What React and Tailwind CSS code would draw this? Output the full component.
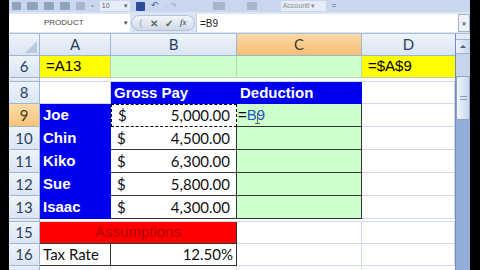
import React from "react";

const hdr = "bg-gradient-to-b from-[#eef3fa] to-[#dbe5f3] text-[#27415f]";
const grid = "border-r border-b border-[#d0d7e5]";
const arial = { fontFamily: '"Liberation Sans", Arial, sans-serif' };
const cal = { fontFamily: 'Lato, "Open Sans", sans-serif' };

function RowHead({ n, active, h }) {
  return (
    <div
      className={`w-[31px] shrink-0 flex items-center justify-center text-[15px] border-r border-b border-[#9eb6ce] ${
        active ? "bg-gradient-to-b from-[#fbdca8] to-[#f6c27a] text-[#4a3a1a]" : hdr
      }`}
      style={{ ...cal, height: h }}
    >
      {n}
    </div>
  );
}

function Money({ v, first }) {
  return (
    <div
      className={`w-[126px] shrink-0 flex items-center justify-between px-[6px] text-[15px] text-[#111] bg-white ${
        first ? "border border-dashed border-black" : "border-r border-b border-[#333]"
      }`}
      style={cal}
    >
      <span>$</span>
      <span>{v}</span>
    </div>
  );
}

function Icon({ c = "#7b8aa6", w = 10 }) {
  return <div className="h-[8px] rounded-[1px] opacity-70" style={{ width: w, background: c }} />;
}

export default function App() {
  const people = [
    ["9", "Joe", "5,000.00"],
    ["10", "Chin", "4,500.00"],
    ["11", "Kiko", "6,300.00"],
    ["12", "Sue", "5,800.00"],
    ["13", "Isaac", "4,300.00"],
  ];
  return (
    <div className="w-[480px] h-[270px] overflow-hidden bg-black flex">
      <div className="ml-[9px] w-[461px] h-full flex flex-col bg-white">
        {/* quick access toolbar */}
        <div className="h-[12px] bg-[#c9d8ef] flex items-center gap-[6px] pl-[3px] text-[8px] text-[#555]" style={arial}>
          <Icon w={9} />
          <Icon w={11} />
          <Icon w={10} />
          <Icon w={10} />
          <Icon w={9} c="#9aa7bf" />
          <span className="text-[#8a97b0]">•</span>
          <div className="w-[30px] h-[10px] bg-[#e6edf8] flex items-center justify-between px-[2px] text-[7px] text-[#666]">
            <span>10</span>
            <span>▾</span>
          </div>
          <div className="w-[9px] h-[9px] bg-[#2b4c9a] rounded-[1px]" />
          <span className="text-[#3a5aa8] text-[9px]">↶</span>
          <span className="text-[#9aa7bf]">- ↷</span>
          <div className="w-[24px]" />
          <Icon w={12} c="#9aa7bf" />
          <div className="w-[10px]" />
          <Icon w={10} c="#9aa7bf" />
          <div className="w-[12px]" />
          <div className="w-[45px] h-[10px] bg-[#e6edf8] flex items-center px-[2px] text-[7px] text-[#8a8a8a]">Accounti ▾</div>
          <span className="text-[#4a5a80] text-[8px]">=</span>
        </div>
        {/* formula bar */}
        <div className="h-[22px] bg-[#dbe5f4] flex items-center pt-[2px] pb-[1px] border-b border-[#a9bcd8]">
          <div className="w-[121px] h-full bg-white flex items-center justify-between pl-[35px] pr-[2px] text-[8px] text-[#444]" style={arial}>
            <span>PRODUCT</span>
            <span className="text-[7px]">▾</span>
          </div>
          <div className="w-[64px] h-[16px] mx-[1px] rounded-full bg-gradient-to-b from-[#f3f6fb] to-[#cfd9e8] border border-[#b4c2d8] flex items-center justify-around px-[4px] text-[10px]">
            <span className="text-[#9aa6b8]">(</span>
            <span className="text-[#666] font-bold">✕</span>
            <span className="text-[#4a6a3a] font-bold">✓</span>
            <span className="italic text-[#333] text-[9px]" style={{ fontFamily: '"Liberation Serif", serif' }}>fx</span>
          </div>
          <div className="flex-1 h-full bg-white flex items-center pl-[3px] text-[10px] text-[#222] border-l border-[#c5d0e0]" style={arial}>
            =B9
          </div>
          <div className="w-[12px] h-full bg-[#eef2f8] border border-[#9fb3cf] flex items-center justify-center text-[8px] text-[#333]">»</div>
        </div>
        <div className="flex-1 flex">
          <div className="flex-1 flex flex-col bg-white">
            {/* column headers */}
            <div className="h-[22px] flex shrink-0 text-[15px]" style={cal}>
              <div className={`w-[31px] border-r border-b border-[#9eb6ce] ${hdr} relative`}>
                <div className="absolute right-[2px] bottom-[2px] w-0 h-0 border-l-[12px] border-l-transparent border-b-[12px] border-b-[#b9c9de]" />
              </div>
              <div className={`w-[71px] flex items-center justify-center border-r border-b border-[#9eb6ce] ${hdr}`}>A</div>
              <div className={`w-[126px] flex items-center justify-center border-r border-b border-[#9eb6ce] ${hdr}`}>B</div>
              <div className="w-[125px] flex items-center justify-center border-r border-b border-[#9eb6ce] bg-gradient-to-b from-[#fbd9a6] to-[#f5bf74] text-[#4a3a1a]">C</div>
              <div className={`flex-1 flex items-center justify-center border-b border-[#9eb6ce] ${hdr}`}>D</div>
            </div>
            {/* row 6 */}
            <div className="h-[22px] flex shrink-0">
              <RowHead n="6" h={22} />
              <div className="w-[71px] bg-[#ffff00] flex items-center pl-[6px] text-[15px] border-r border-b border-[#c9c9a0]" style={arial}>=A13</div>
              <div className="w-[126px] bg-[#ccffcc] border-r border-b border-[#b6d9b6]" />
              <div className="w-[125px] bg-[#ccffcc] border-r border-b border-[#b6d9b6]" />
              <div className="flex-1 bg-[#ffff00] flex items-center pl-[6px] text-[15px] border-b border-[#c9c9a0]" style={arial}>=$A$9</div>
            </div>
            {/* hidden row 7 */}
            <div className="h-[4px] flex shrink-0">
              <div className={`w-[31px] ${hdr} border-r border-b border-[#9eb6ce]`} />
              <div className="flex-1 border-b border-[#d0d7e5]" />
            </div>
            {/* row 8 */}
            <div className="h-[22px] flex shrink-0">
              <RowHead n="8" h={22} />
              <div className={`w-[71px] ${grid}`} />
              <div className="w-[126px] bg-[#0000ee] text-white font-bold flex items-center pl-[3px] text-[15px]" style={arial}>Gross Pay</div>
              <div className="w-[125px] bg-[#0000ee] text-white font-bold flex items-center pl-[3px] text-[15px]" style={arial}>Deduction</div>
              <div className={`flex-1 ${grid}`} />
            </div>
            {people.map(([n, name, v], i) => (
              <div key={n} className="h-[23px] flex shrink-0">
                <RowHead n={n} h={23} active={i === 0} />
                <div className="w-[71px] bg-[#0000ee] text-white font-bold flex items-center pl-[3px] text-[15px]" style={arial}>{name}</div>
                <Money v={v} first={i === 0} />
                <div className="w-[125px] bg-[#ccffcc] border-r border-b border-[#333] flex items-center pl-[1px] text-[15px] relative" style={arial}>
                  {i === 0 && (
                    <>
                      <span>=</span>
                      <span className="text-[#1f56b8]">B9</span>
                      <span className="absolute left-[20px] top-[9px] w-[1px] h-[10px] bg-[#666]" />
                      <span className="absolute left-[18px] top-[19px] w-[5px] h-[1px] bg-[#666]" />
                    </>
                  )}
                </div>
                <div className={`flex-1 ${grid}`} />
              </div>
            ))}
            {/* hidden row 14 */}
            <div className="h-[3px] flex shrink-0">
              <div className={`w-[31px] ${hdr} border-r border-b border-[#9eb6ce]`} />
              <div className="flex-1 border-b border-[#d0d7e5]" />
            </div>
            {/* row 15 */}
            <div className="h-[22px] flex shrink-0">
              <RowHead n="15" h={22} />
              <div className="w-[197px] bg-[#ff0000] flex items-center justify-center text-[15px] text-[#b00000] border-r border-b border-[#333]" style={arial}>Assumptions</div>
              <div className={`w-[125px] ${grid}`} />
              <div className={`flex-1 ${grid}`} />
            </div>
            {/* row 16 */}
            <div className="h-[22px] flex shrink-0">
              <RowHead n="16" h={22} />
              <div className="w-[71px] flex items-center pl-[3px] text-[15px] text-[#111] border-r border-b border-[#333]" style={cal}>Tax Rate</div>
              <div className="w-[126px] flex items-center justify-end pr-[3px] text-[15px] text-[#111] border-r border-b border-[#333]" style={cal}>12.50%</div>
              <div className={`w-[125px] ${grid}`} />
              <div className={`flex-1 ${grid}`} />
            </div>
            <div className="flex-1 flex">
              <div className={`w-[31px] ${hdr} border-r border-[#9eb6ce]`} />
              <div className="w-[71px] border-r border-[#d0d7e5]" />
              <div className="w-[126px] border-r border-[#d0d7e5]" />
              <div className="w-[125px] border-r border-[#d0d7e5]" />
            </div>
          </div>
          {/* vertical scrollbar */}
          <div className="w-[15px] flex flex-col bg-[#8fa8d6] border-l border-[#6f8cc4]">
            <div className="h-[6px] bg-[#e3eaf6] border-b border-[#9fb3cf]" />
            <div className="h-[14px] bg-gradient-to-r from-[#eef3fa] to-[#c9d6ec] border-b border-[#9fb3cf] flex items-center justify-center">
              <div className="w-0 h-0 border-l-[3px] border-r-[3px] border-b-[3px] border-l-transparent border-r-transparent border-b-[#4a5a80]" />
            </div>
            <div className="h-[22px] bg-[#c7d5ec]" />
            <div className="h-[44px] bg-gradient-to-r from-[#f1f5fb] to-[#c8d6ee] border border-[#8ea4c8] rounded-[2px] flex items-center justify-center">
              <div className="w-[7px] h-[4px] border-t border-b border-[#8a9abb]" />
            </div>
            <div className="flex-1 bg-[#94acd8]" />
          </div>
        </div>
      </div>
    </div>
  );
}
